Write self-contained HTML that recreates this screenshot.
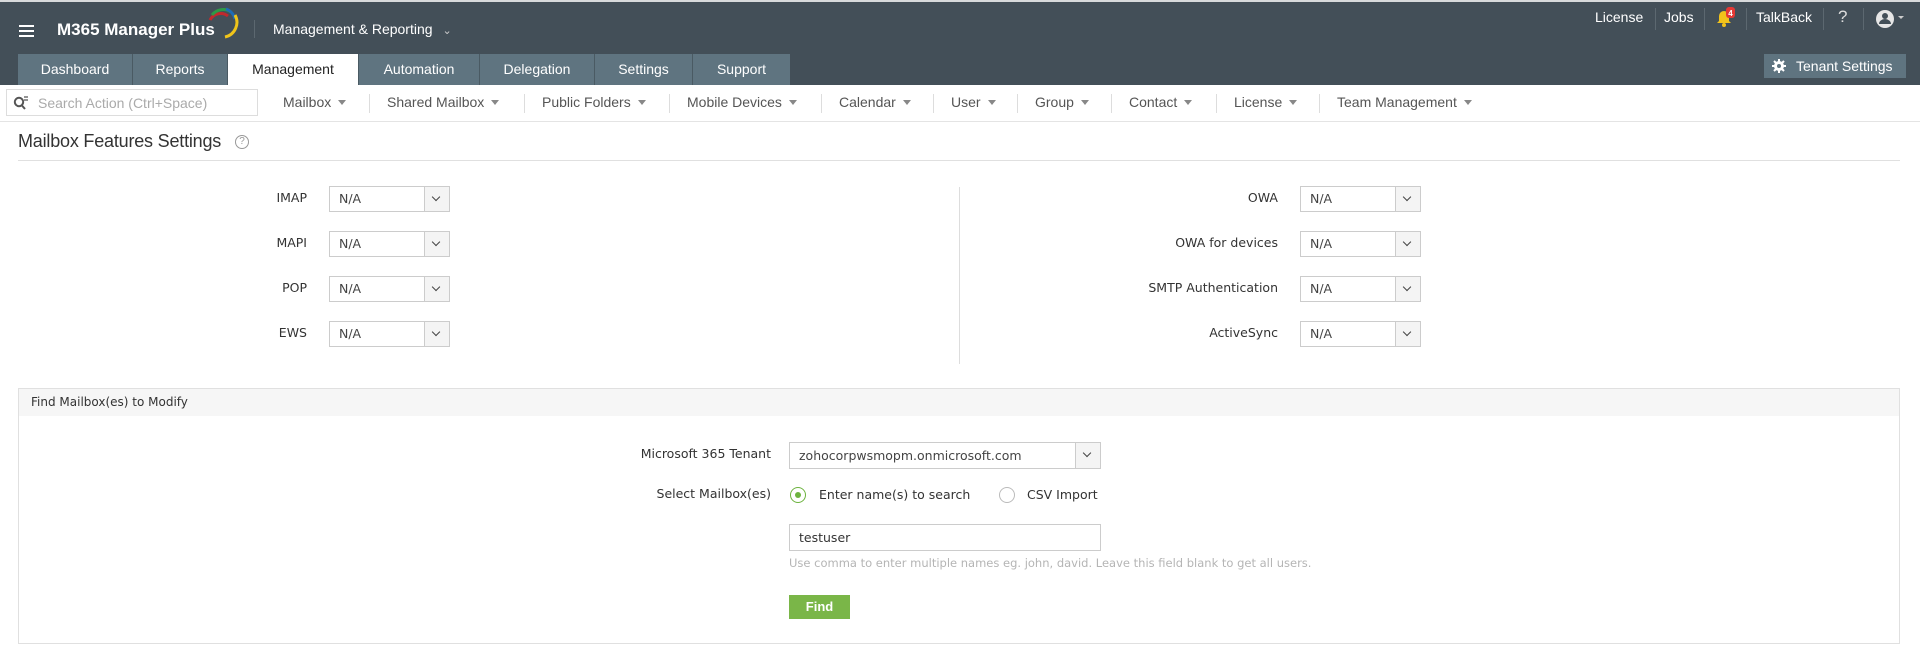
<!DOCTYPE html>
<html><head><meta charset="utf-8"><style>
*{box-sizing:border-box;margin:0;padding:0}
body{width:1920px;height:671px;background:#fff;font-family:"DejaVu Sans","Liberation Sans",sans-serif;position:relative;overflow:hidden;color:#333}
.a{position:absolute}
.hdr{left:0;top:0;width:1920px;height:85px;background:#434f58;border-top:2px solid #d8dadb}
.tab{position:absolute;top:54px;height:31px;background:#5f7480;color:#fff;font:14px "Liberation Sans",sans-serif;text-align:center;line-height:31px;border-right:1px solid #4a5a63}
.tab.on{background:#fff;color:#222}
.tr{color:#fff;font:14px "Liberation Sans",sans-serif;top:9px}
.vs{position:absolute;width:1px;background:#5c6870}
.nav{font:14px "Liberation Sans",sans-serif;color:#555;top:94px}
.car{display:inline-block;width:0;height:0;border-left:4px solid transparent;border-right:4px solid transparent;border-top:5px solid #888;margin-left:7px;vertical-align:2px}
.ns{position:absolute;top:94px;width:1px;height:19px;background:#ddd}
.lbl{font-size:12.5px;color:#333;text-align:right}
.sel{position:absolute;width:121px;height:26px;border:1px solid #ccc;background:#fff;font-size:12.5px;color:#444;padding-left:9px;line-height:24px}
.sel i{position:absolute;right:0;top:0;width:25px;height:24px;background:#f4f4f4;border-left:1px solid #ccc}
.sel i:after{content:"";position:absolute;left:8px;top:7px;width:5px;height:5px;border-right:1.5px solid #444;border-bottom:1.5px solid #444;transform:rotate(45deg)}
</style></head><body>
<div class="a hdr"></div>
<div class="a" style="left:19px;top:25px;width:15px;height:2px;background:#fff;box-shadow:0 5px 0 #fff,0 10px 0 #fff"></div>
<div class="a" style="left:57px;top:20px;color:#fff;font:bold 17px 'Liberation Sans',sans-serif">M365 Manager Plus</div>
<svg class="a" style="left:200px;top:6px" width="40" height="34" viewBox="0 0 40 34"><path d="M10 14 A12 12 0 0 1 28 10" stroke="#c0292d" stroke-width="3" fill="none"/><path d="M12 9 A14 14 0 0 1 31 6" stroke="#2d9a47" stroke-width="3" fill="none"/><path d="M26 3 A14 14 0 0 1 35 13" stroke="#1d6cb6" stroke-width="3" fill="none"/><path d="M35 9 A15 15 0 0 1 25 31" stroke="#f0c419" stroke-width="3" fill="none"/></svg>
<div class="vs" style="left:254px;top:20px;height:18px"></div>
<div class="a" style="left:273px;top:21px;color:#fff;font:14px 'Liberation Sans',sans-serif">Management &amp; Reporting <span style="font-size:11px;color:#ccc;margin-left:6px">&#8964;</span></div>
<div class="tab" style="left:18px;width:115px">Dashboard</div>
<div class="tab" style="left:133px;width:95px">Reports</div>
<div class="tab on" style="left:228px;width:131px">Management</div>
<div class="tab" style="left:359px;width:121px">Automation</div>
<div class="tab" style="left:480px;width:115px">Delegation</div>
<div class="tab" style="left:595px;width:98px">Settings</div>
<div class="tab" style="left:693px;width:97px;border-right:0">Support</div>
<div class="a tr" style="left:1595px">License</div>
<div class="vs" style="left:1655px;top:8px;height:22px"></div>
<div class="a tr" style="left:1664px">Jobs</div>
<div class="vs" style="left:1704px;top:8px;height:22px"></div>
<svg class="a" style="left:1714px;top:7px" width="22" height="22" viewBox="0 0 22 22"><path d="M3 16 L5 14 L5 9 A5 5 0 0 1 15 9 L15 14 L17 16 Z" fill="#f2c31b"/><circle cx="10" cy="18" r="2" fill="#f2c31b"/><rect x="12" y="0" width="9" height="11" rx="3" fill="#e53935"/><text x="16.5" y="9" font-size="8" fill="#fff" text-anchor="middle" font-family="Liberation Sans" font-weight="bold">4</text></svg>
<div class="vs" style="left:1746px;top:8px;height:22px"></div>
<div class="a tr" style="left:1756px">TalkBack</div>
<div class="vs" style="left:1823px;top:8px;height:22px"></div>
<div class="a tr" style="left:1838px;font-size:17px;top:7px;color:#ddd">?</div>
<div class="vs" style="left:1863px;top:8px;height:22px"></div>
<svg class="a" style="left:1875px;top:8px" width="30" height="22" viewBox="0 0 30 22"><circle cx="10" cy="11" r="9" fill="#e6e6e6"/><circle cx="10" cy="8" r="3" fill="#434f58"/><path d="M4 16 A6 5 0 0 1 16 16 Z" fill="#434f58"/><path d="M23 8 L29 8 L26 11 Z" fill="#ccc"/></svg>
<div class="a" style="left:1764px;top:54px;width:142px;height:24px;background:#5f7480;color:#fff;font:14px 'Liberation Sans',sans-serif;line-height:24px;padding-left:32px">Tenant Settings</div>
<svg class="a" style="left:1772px;top:59px" width="14" height="14" viewBox="0 0 14 14"><circle cx="7" cy="7" r="5" fill="#fff"/><circle cx="7" cy="7" r="2" fill="#5f7480"/><path d="M7 0v3M7 11v3M0 7h3M11 7h3M2 2l2 2M10 10l2 2M2 12l2-2M10 4l2-2" stroke="#fff" stroke-width="2"/></svg>
<div class="a" style="left:6px;top:89px;width:252px;height:27px;border:1px solid #ddd"></div>
<svg class="a" style="left:13px;top:95px" width="16" height="16" viewBox="0 0 16 16"><circle cx="6" cy="7" r="4.2" fill="none" stroke="#555" stroke-width="2"/><path d="M8.5 10 L12 14" stroke="#555" stroke-width="2"/><path d="M11 2h4M11 5h4" stroke="#555" stroke-width="1.3"/></svg>
<div class="a" style="left:38px;top:95px;font:14px 'Liberation Sans',sans-serif;color:#aaa">Search Action (Ctrl+Space)</div>
<div class="a nav" style="left:283px">Mailbox<span class="car"></span></div>
<div class="ns" style="left:369px"></div>
<div class="a nav" style="left:387px">Shared Mailbox<span class="car"></span></div>
<div class="ns" style="left:524px"></div>
<div class="a nav" style="left:542px">Public Folders<span class="car"></span></div>
<div class="ns" style="left:669px"></div>
<div class="a nav" style="left:687px">Mobile Devices<span class="car"></span></div>
<div class="ns" style="left:821px"></div>
<div class="a nav" style="left:839px">Calendar<span class="car"></span></div>
<div class="ns" style="left:933px"></div>
<div class="a nav" style="left:951px">User<span class="car"></span></div>
<div class="ns" style="left:1017px"></div>
<div class="a nav" style="left:1035px">Group<span class="car"></span></div>
<div class="ns" style="left:1111px"></div>
<div class="a nav" style="left:1129px">Contact<span class="car"></span></div>
<div class="ns" style="left:1216px"></div>
<div class="a nav" style="left:1234px">License<span class="car"></span></div>
<div class="ns" style="left:1319px"></div>
<div class="a nav" style="left:1337px">Team Management<span class="car"></span></div>
<div class="a" style="left:0;top:121px;width:1920px;height:1px;background:#e4e4e4"></div>
<div class="a" style="left:18px;top:131px;font:18px 'Liberation Sans',sans-serif;color:#333;letter-spacing:-0.2px">Mailbox Features Settings</div>
<div class="a" style="left:235px;top:135px;width:14px;height:14px;border:1px solid #999;border-radius:50%;font:10px 'Liberation Sans',sans-serif;color:#999;text-align:center;line-height:12px">?</div>
<div class="a" style="left:18px;top:160px;width:1882px;height:1px;background:#e0e0e0"></div>

<div class="a lbl" style="left:200px;width:107px;top:190px">IMAP</div>
<div class="a lbl" style="left:200px;width:107px;top:235px">MAPI</div>
<div class="a lbl" style="left:200px;width:107px;top:280px">POP</div>
<div class="a lbl" style="left:200px;width:107px;top:325px">EWS</div>
<div class="sel" style="left:329px;top:186px">N/A<i></i></div>
<div class="sel" style="left:329px;top:231px">N/A<i></i></div>
<div class="sel" style="left:329px;top:276px">N/A<i></i></div>
<div class="sel" style="left:329px;top:321px">N/A<i></i></div>
<div class="a" style="left:959px;top:187px;width:1px;height:177px;background:#ddd"></div>
<div class="a lbl" style="left:1078px;width:200px;top:190px">OWA</div>
<div class="a lbl" style="left:1078px;width:200px;top:235px">OWA for devices</div>
<div class="a lbl" style="left:1078px;width:200px;top:280px">SMTP Authentication</div>
<div class="a lbl" style="left:1078px;width:200px;top:325px">ActiveSync</div>
<div class="sel" style="left:1300px;top:186px">N/A<i></i></div>
<div class="sel" style="left:1300px;top:231px">N/A<i></i></div>
<div class="sel" style="left:1300px;top:276px">N/A<i></i></div>
<div class="sel" style="left:1300px;top:321px">N/A<i></i></div>

<div class="a" style="left:18px;top:388px;width:1882px;height:256px;border:1px solid #e0e0e0"></div>
<div class="a" style="left:19px;top:389px;width:1880px;height:27px;background:#f6f6f6;font-size:12px;line-height:27px;padding-left:12px;color:#333">Find Mailbox(es) to Modify</div>
<div class="a lbl" style="left:500px;width:271px;top:446px">Microsoft 365 Tenant</div>
<div class="sel" style="left:789px;top:442px;width:312px;height:27px;line-height:25px">zohocorpwsmopm.onmicrosoft.com<i style="height:25px"></i></div>
<div class="a lbl" style="left:500px;width:271px;top:486px">Select Mailbox(es)</div>
<div class="a" style="left:790px;top:487px;width:16px;height:16px;border:1.5px solid #6db33f;border-radius:50%"></div>
<div class="a" style="left:795px;top:492px;width:6px;height:6px;background:#6db33f;border-radius:50%"></div>
<div class="a" style="left:819px;top:487px;font-size:12.5px">Enter name(s) to search</div>
<div class="a" style="left:999px;top:487px;width:16px;height:16px;border:1.5px solid #bbb;border-radius:50%"></div>
<div class="a" style="left:1027px;top:487px;font-size:12.5px">CSV Import</div>
<div class="a" style="left:789px;top:524px;width:312px;height:27px;border:1px solid #ccc;font-size:12.5px;line-height:25px;padding-left:9px">testuser</div>
<div class="a" style="left:789px;top:556px;font-size:11.5px;color:#b5b5b5">Use comma to enter multiple names eg. john, david. Leave this field blank to get all users.</div>
<div class="a" style="left:789px;top:595px;width:61px;height:24px;background:#7ab648;color:#fff;font:bold 13px 'Liberation Sans',sans-serif;text-align:center;line-height:24px">Find</div>
</body></html>
